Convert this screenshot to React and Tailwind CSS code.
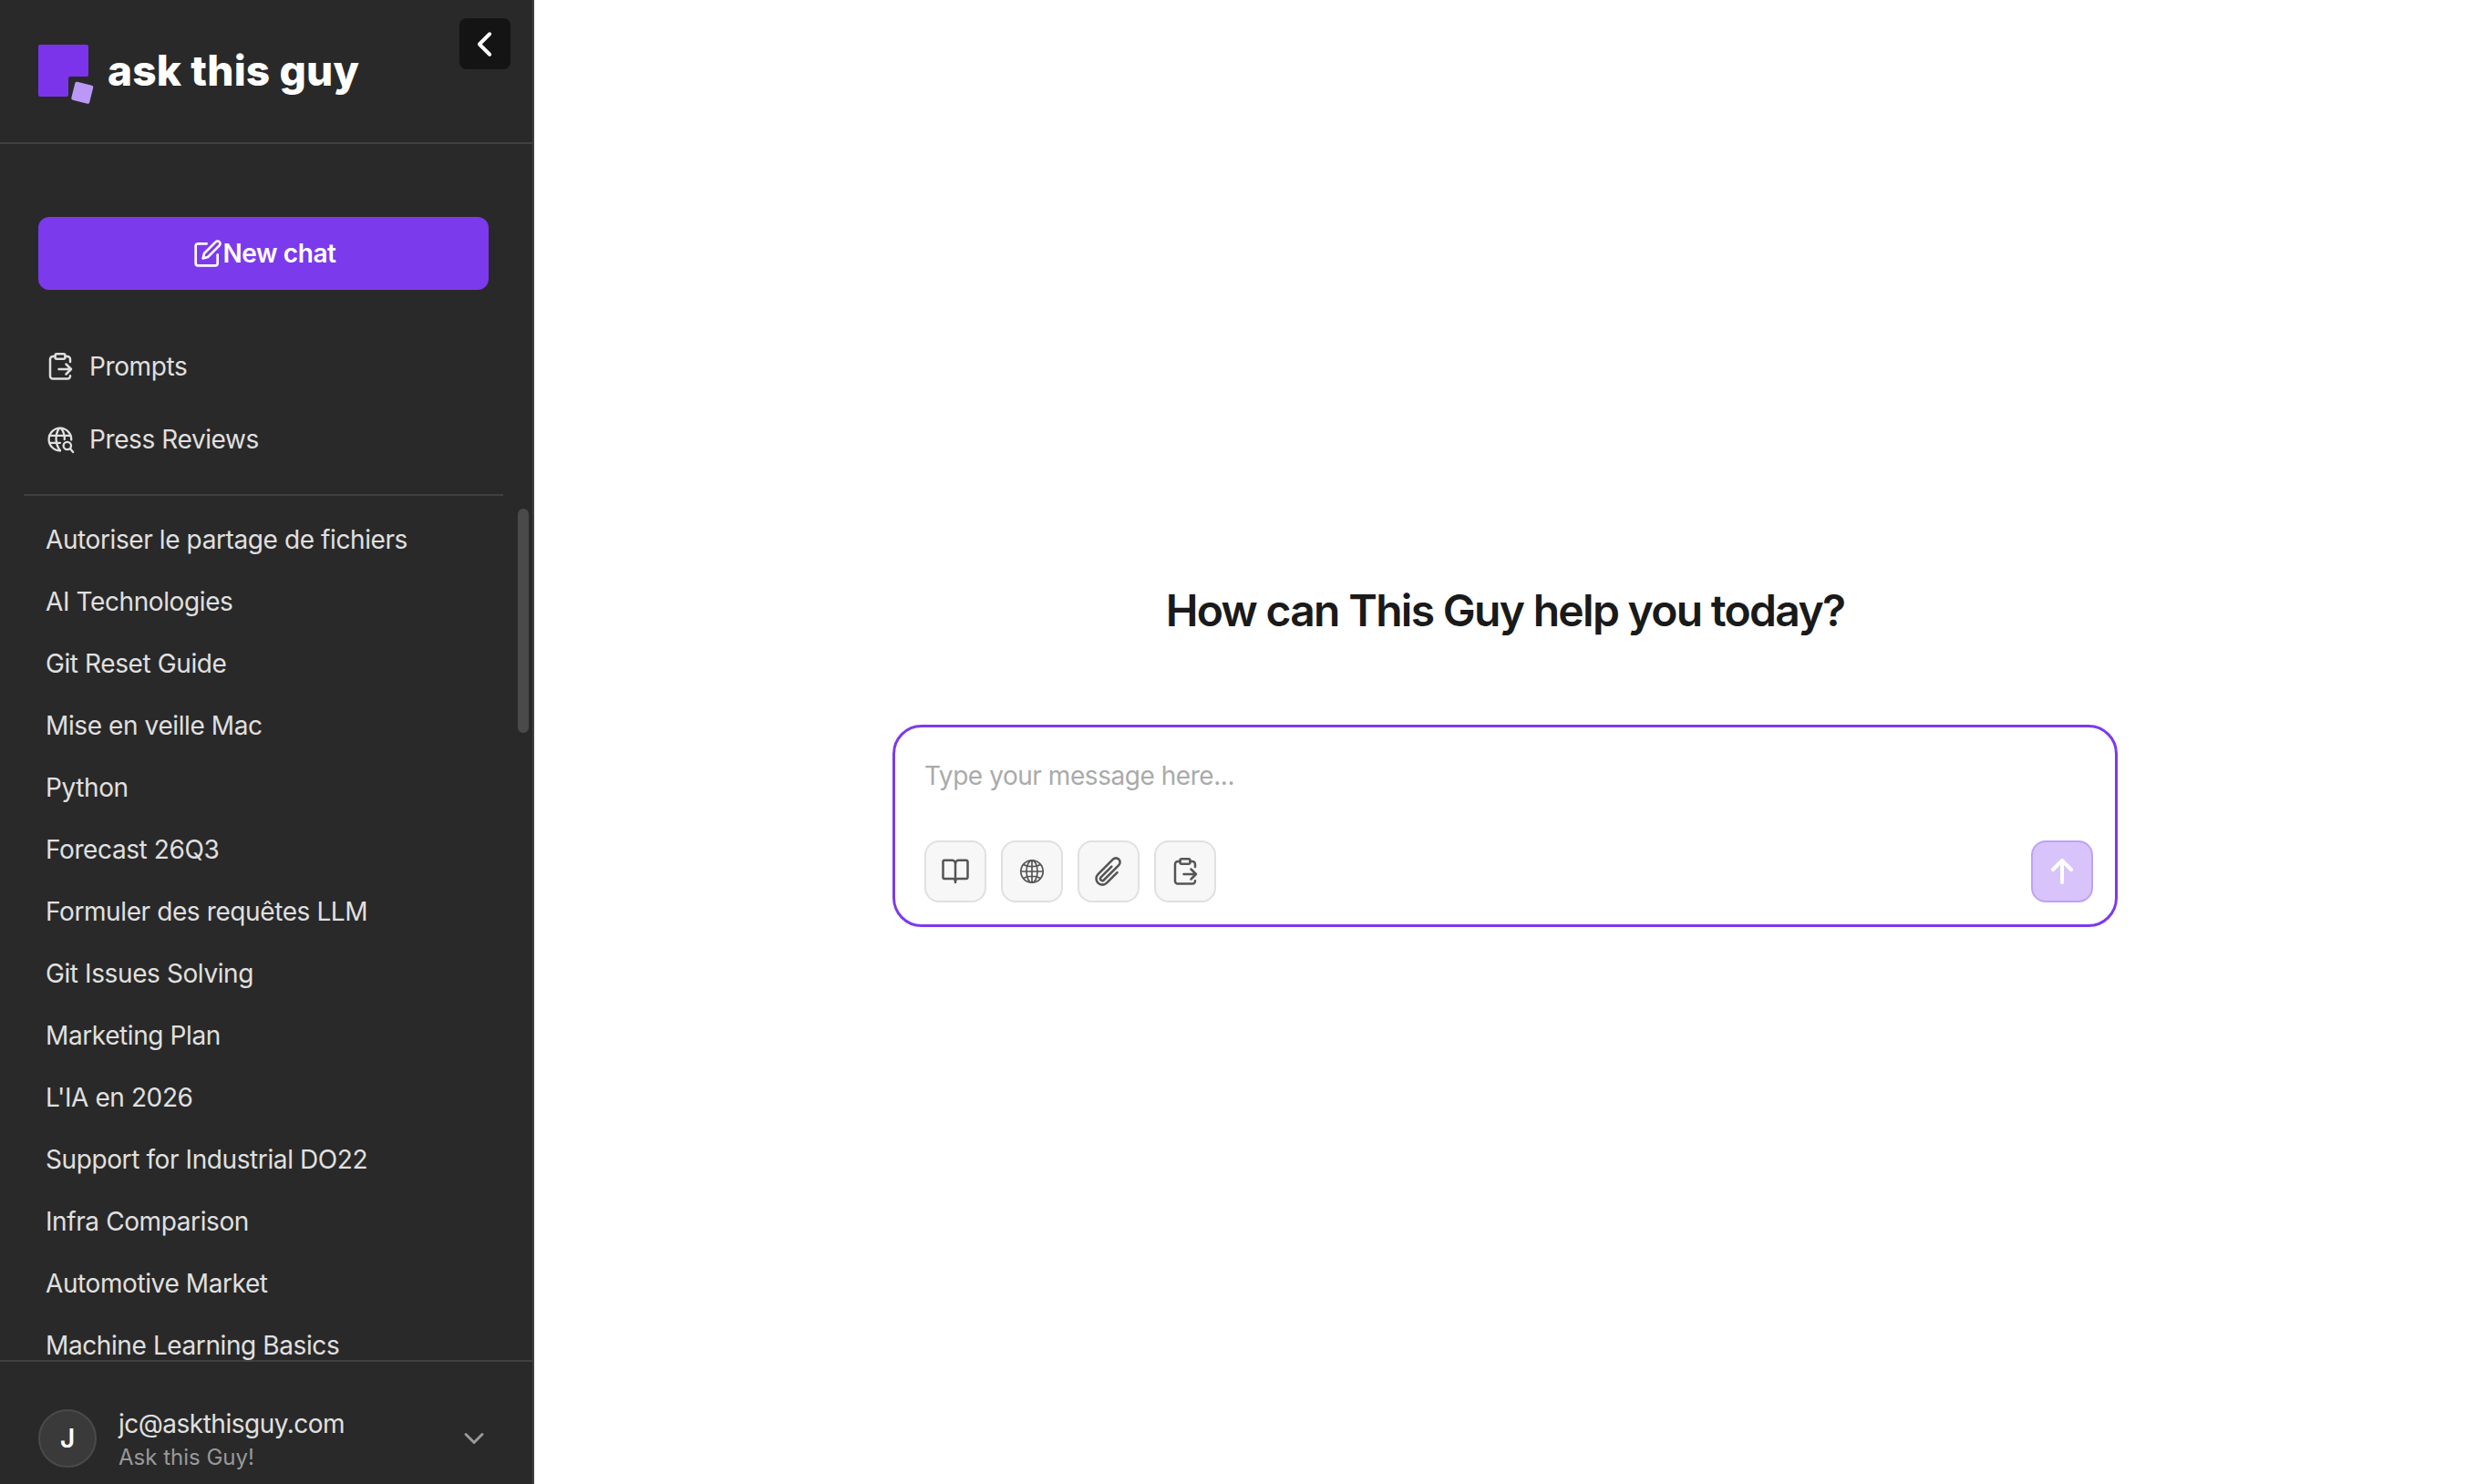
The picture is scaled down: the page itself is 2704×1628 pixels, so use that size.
import { ChevronDown, ChevronLeft } from "lucide-react";

const chats = [
  "Autoriser le partage de fichiers",
  "AI Technologies",
  "Git Reset Guide",
  "Mise en veille Mac",
  "Python",
  "Forecast 26Q3",
  "Formuler des requêtes LLM",
  "Git Issues Solving",
  "Marketing Plan",
  "L'IA en 2026",
  "Support for Industrial DO22",
  "Infra Comparison",
  "Automotive Market",
  "Machine Learning Basics",
];

function Logo() {
  return (
    <svg width="62" height="68" viewBox="0 0 62 68" className="shrink-0">
      <path
        d="M2 0H53a2 2 0 0 1 2 2V33a2 2 0 0 1-2 2H35a2 2 0 0 0-2 2V55a2 2 0 0 1-2 2H2a2 2 0 0 1-2-2V2a2 2 0 0 1 2-2Z"
        fill="#7c34eb"
      />
      <rect x="38" y="42.500" width="20.500" height="20.500" rx="2" fill="#bb98f5" transform="rotate(14 48.200 52.800)" />
    </svg>
  );
}

function EditIcon() {
  return (
    <svg width="32" height="32" viewBox="0 0 24 24" fill="none" stroke="currentColor" strokeWidth="2" strokeLinecap="round" strokeLinejoin="round">
      <path d="M11 4H4a2 2 0 0 0-2 2v14a2 2 0 0 0 2 2h14a2 2 0 0 0 2-2v-7" />
      <path d="M18.500 2.500a2.121 2.121 0 0 1 3 3L12 15l-4 1 1-4 9.500-9.500z" />
    </svg>
  );
}

function PromptIcon() {
  return (
    <svg width="32" height="32" viewBox="0 0 32 32" fill="none" stroke="currentColor" strokeWidth="2.500" strokeLinecap="round" strokeLinejoin="round">
      <rect x="10.500" y="2.300" width="11" height="5.500" rx="1.800" />
      <path d="M21.500 5H24a3 3 0 0 1 3 3v3M10.500 5H8a3 3 0 0 0-3 3v18.500a3 3 0 0 0 3 3h16a3 3 0 0 0 3-3.200" />
      <path d="M14.500 19H28M22.500 13.500 28 19l-5.500 5.500" />
    </svg>
  );
}

function GlobeSearchIcon() {
  return (
    <svg width="32" height="32" viewBox="0 0 32 32" fill="none" stroke="currentColor" strokeWidth="2.300" strokeLinecap="round">
      <path d="M28.200 16.500A12.300 12.300 0 1 0 16 28.300" />
      <path d="M14.800 4C10.300 10.500 10.300 21 16 28.300M17.200 4c2.600 3.600 3.800 7.800 3.600 12M4.500 11.800h23M4.500 19.800h11.500" />
      <circle cx="23.800" cy="23" r="4.200" />
      <path d="m27 26.300 3.200 3.700" />
    </svg>
  );
}

function BookIcon() {
  return (
    <svg width="32" height="32" viewBox="0 0 32 32" fill="none" stroke="currentColor" strokeWidth="2.500" strokeLinecap="round" strokeLinejoin="round">
      <path d="M16 7v21" />
      <path d="M4 24a1.500 1.500 0 0 1-1.500-1.500V5.300A1.500 1.500 0 0 1 4 3.800h8.500A3.500 3.500 0 0 1 16 7.300a3.500 3.500 0 0 1 3.500-3.500H28a1.500 1.500 0 0 1 1.500 1.500v17.200A1.500 1.500 0 0 1 28 24h-9.500a2.500 2.500 0 0 0-2.500 2.500 2.500 2.500 0 0 0-2.500-2.500Z" />
    </svg>
  );
}

function GlobeIcon() {
  return (
    <svg width="28" height="28" viewBox="0 0 28 28" fill="none" stroke="currentColor" strokeWidth="1.700">
      <circle cx="14" cy="14" r="12.200" />
      <ellipse cx="14" cy="14" rx="6" ry="12.200" />
      <path d="M14 1.800v24.400M1.800 14h24.400M4.500 6.500c5 3 14 3 19 0M4.500 21.500c5-3 14-3 19 0" />
    </svg>
  );
}

function ClipIcon() {
  return (
    <svg width="36" height="36" viewBox="0 0 24 24" fill="none" stroke="currentColor" strokeWidth="1.700" strokeLinecap="round" strokeLinejoin="round">
      <path d="m18.375 12.739-7.693 7.693a4.500 4.500 0 0 1-6.364-6.364l10.940-10.940A3 3 0 1 1 19.500 7.372L8.552 18.320m.009-.010-.010.010m5.699-9.941-7.810 7.810a1.500 1.500 0 0 0 2.112 2.130" />
    </svg>
  );
}

function SendIcon() {
  return (
    <svg width="32" height="32" viewBox="0 0 32 32" fill="none" stroke="currentColor" strokeWidth="4" strokeLinecap="round" strokeLinejoin="round">
      <path d="M16 28V4M6 14 16 4l10 10" />
    </svg>
  );
}

function ToolButton({ label, children }) {
  return (
    <button
      aria-label={label}
      className="flex size-[68px] items-center justify-center rounded-2xl border-2 border-[#e0e0e0] bg-[#f7f7f7] text-[#555]"
    >
      {children}
    </button>
  );
}

function Sidebar() {
  return (
    <aside className="flex w-[586px] shrink-0 flex-col border-r-2 border-[#404040] bg-[#292929] text-[28px] tracking-[-0.4px] text-[#e0e0e0]">
      <header className="flex h-[158px] shrink-0 items-start justify-between border-b-2 border-[#404040] pr-6 pl-[42px]">
        <div className="flex gap-[14px] pt-[49px]">
          <Logo />
          <span className="text-[46px] leading-[56px] font-extrabold tracking-[0.15px] text-white">ask this guy</span>
        </div>
        <button className="mt-5 flex size-14 items-center justify-center rounded-lg bg-[#141414] pr-0.5 text-white">
          <ChevronLeft size={45} strokeWidth={2.100} />
        </button>
      </header>

      <div className="shrink-0 pt-20 pr-12 pl-[42px]">
        <button className="flex h-20 w-full items-center justify-center rounded-xl bg-[#7c3aed] pl-[3px] font-semibold text-white">
          <EditIcon />
          New chat
        </button>
      </div>

      <nav className="mr-8 ml-[26px] flex h-[226px] shrink-0 flex-col border-b-2 border-[#404040] pt-11 pl-6">
        <a className="flex h-20 items-center gap-4">
          <PromptIcon />
          Prompts
        </a>
        <a className="flex h-20 items-center gap-4">
          <GlobeSearchIcon />
          Press Reviews
        </a>
      </nav>

      <div className="flex min-h-0 flex-1 justify-between overflow-hidden pt-[14px]">
        <ul className="pl-[50px]">
          {chats.map((chat) => (
            <li key={chat} className="flex h-[68px] items-center whitespace-nowrap">
              {chat}
            </li>
          ))}
        </ul>
        <div className="mr-1 h-[246px] w-3 rounded-full bg-[#4a4a4a]" />
      </div>

      <footer className="flex h-[136px] shrink-0 items-start border-t-2 border-[#404040] pt-[52px] pr-[46px] pl-[42px]">
        <div className="flex size-16 items-center justify-center rounded-full border-2 border-[#4a4a4a] bg-[#3a3a3a] text-[28px] font-semibold text-white">
          J
        </div>
        <div className="-mt-px ml-6 flex-1">
          <p className="leading-[35px] tracking-[-0.5px]">jc@askthisguy.com</p>
          <p className="text-[24px] leading-[38px] tracking-normal text-[#999]">Ask this Guy!</p>
        </div>
        <ChevronDown size={36} className="mt-[14px] text-[#999]" />
      </footer>
    </aside>
  );
}

export default function App() {
  return (
    <div className="flex h-screen bg-white font-['Inter',sans-serif]">
      <Sidebar />
      <main className="flex flex-1 flex-col items-center pt-[640px] pl-3">
        <h1 className="h-[60px] text-[48px] leading-[60px] font-semibold tracking-[-1.7px] whitespace-nowrap text-[#1a1a1a]">
          How can This Guy help you today?
        </h1>
        <div className="mt-[95px] flex h-[222px] w-[1344px] flex-col justify-between rounded-[32px] border-3 border-[#7c3aed] px-8 pt-8 pb-6">
          <p className="text-[28px] leading-[42px] tracking-[-0.45px] text-[#aaa]">Type your message here...</p>
          <div className="flex justify-between">
            <div className="flex gap-4">
              <ToolButton label="Library">
                <BookIcon />
              </ToolButton>
              <ToolButton label="Web search">
                <GlobeIcon />
              </ToolButton>
              <ToolButton label="Attach file">
                <ClipIcon />
              </ToolButton>
              <ToolButton label="Prompts">
                <PromptIcon />
              </ToolButton>
            </div>
            <button
              aria-label="Send"
              className="-mr-2 flex size-[68px] items-center justify-center rounded-2xl border-2 border-[#bda2f7] bg-[#d8c4fa] text-white"
            >
              <SendIcon />
            </button>
          </div>
        </div>
      </main>
    </div>
  );
}
